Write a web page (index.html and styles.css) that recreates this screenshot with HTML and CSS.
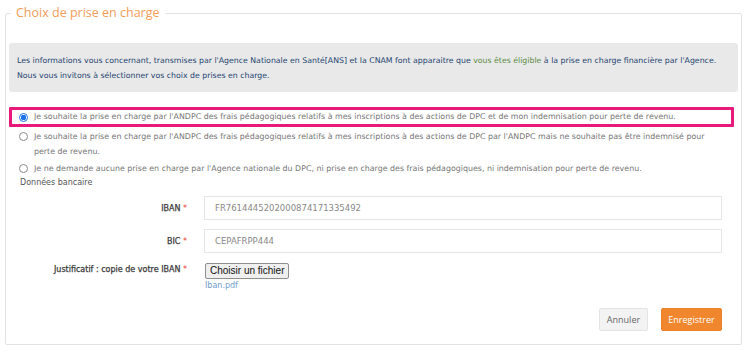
FILE: index.html
```html
<!DOCTYPE html>
<html lang="fr">
<head>
<meta charset="utf-8">
<title>Choix de prise en charge</title>
<link rel="stylesheet" href="styles.css">
</head>
<body>
<fieldset class="panel">
  <legend class="panel-title">Choix de prise en charge</legend>
  <div class="info">
    Les informations vous concernant, transmises par l'Agence Nationale en Santé[ANS] et la CNAM font apparaitre que <span class="ok">vous êtes éligible</span> à la prise en charge financière par l'Agence.<br>
    Nous vous invitons à sélectionner vos choix de prises en charge.
  </div>
  <div class="options">
    <label class="option selected">
      <span class="radio checked"></span>
      <span class="option-text">Je souhaite la prise en charge par l'ANDPC des frais pédagogiques relatifs à mes inscriptions à des actions de DPC et de mon indemnisation pour perte de revenu.</span>
    </label>
    <label class="option">
      <span class="radio"></span>
      <span class="option-text">Je souhaite la prise en charge par l'ANDPC des frais pédagogiques relatifs à mes inscriptions à des actions de DPC par l'ANDPC mais ne souhaite pas être indemnisé pour perte de revenu.</span>
    </label>
    <label class="option">
      <span class="radio"></span>
      <span class="option-text">Je ne demande aucune prise en charge par l'Agence nationale du DPC, ni prise en charge des frais pédagogiques, ni indemnisation pour perte de revenu.</span>
    </label>
  </div>
  <div class="section-title">Données bancaire</div>
  <div class="form">
    <div class="label">IBAN <span class="req">*</span></div>
    <div class="input">FR7614445202000874171335492</div>
    <div class="label">BIC <span class="req">*</span></div>
    <div class="input">CEPAFRPP444</div>
    <div class="label file-label">Justificatif : copie de votre IBAN <span class="req">*</span></div>
    <div class="file-cell">
      <button class="file-btn" type="button">Choisir un fichier</button>
      <div class="file-name">Iban.pdf</div>
    </div>
  </div>
  <div class="actions">
    <button class="btn btn-cancel" type="button">Annuler</button>
    <button class="btn btn-save" type="button">Enregistrer</button>
  </div>
</fieldset>
</body>
</html>
```
FILE: styles.css
```css
html, body {
  margin: 0;
  padding: 0;
  background: #fff;
}
body {
  padding: 3px 7px 0 5px;
  font-family: "DejaVu Sans", Verdana, sans-serif;
  font-size: 8px;
}
.panel {
  margin: 0;
  border: 1px solid #e2e2e2;
  border-radius: 2px;
  padding: 20px 3px 13px 3px;
  min-width: 0;
}
.panel-title {
  font-family: "Open Sans", sans-serif;
  font-size: 12.5px;
  line-height: 20px;
  color: #f29c58;
  padding: 0 5px;
  margin-left: 2px;
}
.info {
  background: #e9e9ea;
  border-radius: 3px;
  padding: 10px 8px 9px 8px;
  line-height: 15px;
  color: #24456e;
  font-size: 7.8px;
}
.ok {
  color: #5b8c3e;
}
.options {
  margin-top: 15px;
  display: flex;
  flex-direction: column;
  gap: 2px;
}
.option {
  display: flex;
  align-items: flex-start;
  gap: 6px;
  padding: 0 0 0 10px;
  color: #767676;
  line-height: 15px;
  font-size: 7.9px;
  margin-right: 4px;
}
.option-text {
  padding-right: 26px;
}
.option.selected {
  border: 3px solid #e8197d;
  border-radius: 1px;
  padding: 0 0 0 7px;
  line-height: 14px;
}
.radio {
  flex: none;
  width: 9px;
  height: 9px;
  border: 1px solid #8a8a8a;
  border-radius: 50%;
  box-sizing: border-box;
  margin-top: 3px;
  background: #fff;
}
.selected .radio {
  margin-top: 2.5px;
}
.radio.checked {
  border: 1px solid #1a73e8;
  background: radial-gradient(circle, #1a73e8 0 2.6px, #fff 3px);
}
.section-title {
  color: #555;
  line-height: 13px;
  padding-left: 11px;
}
.form {
  display: grid;
  grid-template-columns: 178px 518px;
  column-gap: 17px;
  row-gap: 9px;
  margin-top: 7px;
  align-items: center;
}
.label {
  text-align: right;
  color: #3a3a3a;
  font-size: 8px;
  -webkit-text-stroke: 0.25px #3a3a3a;
}
.req {
  color: #e53935;
  -webkit-text-stroke: 0;
}
.input {
  height: 24px;
  box-sizing: border-box;
  border: 1px solid #e6e6e8;
  padding: 0 10px;
  display: flex;
  align-items: center;
  color: #888;
  font-size: 8.5px;
}
.file-label {
  align-self: start;
  padding-top: 3px;
}
.file-cell {
  margin-top: 1px;
  padding-left: 1px;
}
.file-btn {
  font-family: "Liberation Sans", Arial, sans-serif;
  font-size: 10px;
  line-height: 12px;
  padding: 1px 4px;
  background: #efefef;
  border: 1px solid #8f8f8f;
  border-radius: 2px;
  color: #111;
}
.file-name {
  color: #6f9dcb;
  line-height: 13px;
}
.actions {
  display: flex;
  justify-content: flex-end;
  gap: 13px;
  margin-top: 16px;
  padding-right: 16px;
}
.btn {
  font-family: "Open Sans", sans-serif;
  font-size: 9px;
  height: 23px;
  border-radius: 2px;
  padding: 0 6px;
}
.btn-cancel {
  background: #f3f3f3;
  border: 1px solid #e4e4e4;
  color: #666;
  width: 49px;
}
.btn-save {
  background: #f0862e;
  border: 1px solid #ec8128;
  color: #fff;
  width: 61px;
}
```
